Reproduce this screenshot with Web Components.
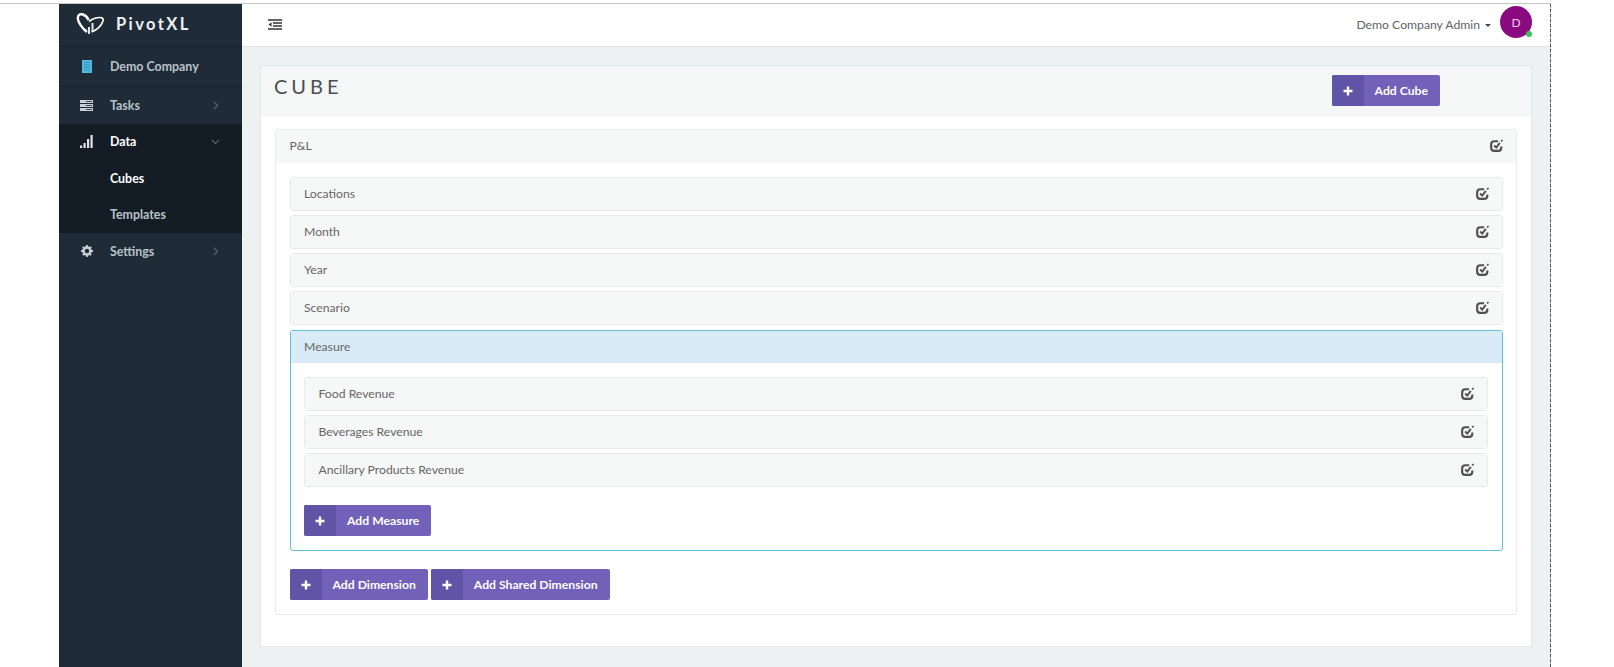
<!DOCTYPE html>
<html>
<head>
<meta charset="utf-8">
<title>PivotXL</title>
<style>
  html, body { margin: 0; height: 100%; background: #fff; overflow: hidden; }
  body { font-family: Lato, "Open Sans", sans-serif; }
</style>
</head>
<body>

<template id="nav-item-tpl">
  <style>
    :host { display: flex; align-items: center; height: 36.5px; color: #b9c2c9; font-size: 12.4px; font-weight: 700; }
    :host([active]) { color: #fff; }
    :host([first]) { height: 39px; }
    .icon { width: 51px; box-sizing: border-box; display: flex; justify-content: center; padding-left: 4px; flex: none; }
    .label { flex: 1; }
    .caret { width: 29px; flex: none; display: flex; }
  </style>
  <span class="icon"><slot name="icon"></slot></span>
  <span class="label"><slot></slot></span>
  <span class="caret"><slot name="caret"></slot></span>
</template>

<template id="button-tpl">
  <style>
    :host { display: inline-flex; height: 31px; border-radius: 2px; background: #7161b8; color: #fff; font-size: 12.2px; font-weight: 700; overflow: hidden; }
    .plus { width: 32px; background: #6153a6; display: flex; align-items: center; justify-content: center; flex: none; }
    .text { padding: 0 12px 0 11px; display: flex; align-items: center; white-space: nowrap; }
  </style>
  <span class="plus">
    <svg width="10" height="10" viewBox="0 0 10 10"><path d="M5 .5v9M.5 5h9" stroke="#fff" stroke-width="2.400" fill="none"/></svg>
  </span>
  <span class="text"><slot></slot></span>
</template>

<template id="row-tpl">
  <style>
    :host { display: block; border: 1px solid #e8ebec; border-radius: 3px; background: #fff; color: #666; font-size: 12.2px; }
    :host([active]) { border-color: #63c0cf; margin-top: 1px; }
    :host([tall]) .head { height: 33px; }
    .head { display: flex; align-items: center; justify-content: space-between; height: 32px; padding: 0 12px 2px 13.500px; box-sizing: border-box; background: #f6f7f7; }
    :host([active]) .head { background: #d9ebf7; }
    :host([active]) .edit { display: none; }
    .body { display: none; padding: 14px 13.500px; }
    :host([open]) .body { display: block; }
    svg { display: block; }
  </style>
  <div class="head">
    <span id="title"></span>
    <svg class="edit" width="15" height="15" viewBox="0 0 14 14" fill="none" stroke="#505050" stroke-width="2">
      <path d="M11.500 8v1c0 1.800-1 3-3 3H5c-2 0-3-1.200-3-3V6c0-2 1-3 3-3h3.500"/>
      <path d="M4.800 7l2 2 3.300-4.400" stroke-width="1.800"/>
      <path d="M11.300 3.200l1.300-1.400" stroke-width="1.500"/>
    </svg>
  </div>
  <div class="body"><slot></slot></div>
</template>

<template id="sidebar-tpl">
  <style>
    :host { display: block; width: 183px; flex: none; background: #1f2c38; }
    .logo { height: 43px; display: flex; align-items: center; padding: 0 0 3px 17px; gap: 11px; color: #eef1f3; font-size: 16.500px; font-weight: 700; letter-spacing: 2.400px; border-bottom: 1px solid #18222c; box-sizing: border-box; }
    .open { background: #141c25; }
    .sep { border-bottom: 1px solid #18222c; }
    .down { margin-left: -2px; }
    svg { display: block; }
  </style>
  <div class="logo">
    <svg width="29" height="23" viewBox="0 0 29 23" fill="none">
      <path d="M11 20C6 16 2 10 1.800 6.500 1.600 3 4 1.500 7 2.500c3 1 4.500 3 5.500 5.500" stroke="#fff" stroke-width="2.400"/>
      <path d="M15.500 20c5-2 10-6.500 11.500-11 .7-2.300-.8-3.500-3-3.500-4 0-8 1.500-11 4" stroke="#fff" stroke-width="1.700"/>
      <path d="M9.500 20v-3M13 22v-7M16.500 19v-8" stroke="#dfe5ea" stroke-width="2"/>
    </svg>
    <span>PivotXL</span>
  </div>
  <px-nav-item class="sep" first>
    <svg slot="icon" width="10" height="13" viewBox="0 0 10 13"><rect width="10" height="13" fill="#4fb9e3"/><path d="M2 2.500h6M2 5h6M2 7.500h6M2 10h6" stroke="#2a7fa6" stroke-width="1" stroke-dasharray="1.500 .7"/></svg>
    Demo Company
  </px-nav-item>
  <px-nav-item>
    <svg slot="icon" width="13" height="11" viewBox="0 0 13 11"><path d="M0 0h13v3H0zM0 4h13v3H0zM0 8h13v3H0z" fill="#c9ced2"/><path d="M6 1.500h6M6 5.500h6M6 9.500h6" stroke="#1f2c38" stroke-width=".8"/></svg>
    Tasks
    <svg slot="caret" width="6" height="9" viewBox="0 0 6 9" fill="none" stroke="#56636e" stroke-width="1.200"><path d="M1 1l3.500 3.500L1 8"/></svg>
  </px-nav-item>
  <div class="open">
    <px-nav-item active>
      <svg slot="icon" width="13" height="13" viewBox="0 0 13 13" fill="#dfe3e6"><rect x="0" y="10.500" width="2.200" height="2.500"/><rect x="3.500" y="8" width="2.200" height="5"/><rect x="7" y="4" width="2.200" height="9"/><rect x="10.500" y="0" width="2.200" height="13"/></svg>
      Data
      <svg class="down" slot="caret" width="9" height="6" viewBox="0 0 9 6" fill="none" stroke="#56636e" stroke-width="1.200"><path d="M1 1l3.500 3.500L8 1"/></svg>
    </px-nav-item>
    <px-nav-item active>Cubes</px-nav-item>
    <px-nav-item>Templates</px-nav-item>
  </div>
  <px-nav-item>
    <svg slot="icon" width="12" height="12" viewBox="0 0 12 12"><circle cx="6" cy="6" r="3.500" fill="none" stroke="#c9ced2" stroke-width="2.600"/><path d="M6 0v12M0 6h12M1.800 1.800l8.400 8.400M10.200 1.800l-8.400 8.400" stroke="#c9ced2" stroke-width="1.800" stroke-dasharray="2 8"/></svg>
    Settings
    <svg slot="caret" width="6" height="9" viewBox="0 0 6 9" fill="none" stroke="#56636e" stroke-width="1.200"><path d="M1 1l3.500 3.500L1 8"/></svg>
  </px-nav-item>
</template>

<template id="topbar-tpl">
  <style>
    :host { display: flex; align-items: center; height: 43px; background: #fff; padding: 0 18px 2px 26px; border-bottom: 1px solid #e4e7e9; box-sizing: border-box; font-size: 12.2px; color: #5d6468; }
    .who { margin-left: auto; display: flex; align-items: center; }
    .tri { width: 0; height: 0; border: 3.500px solid transparent; border-top-color: #444; border-bottom: 0; margin: 2px 9px 0 5px; }
    .avatar { position: relative; width: 32px; height: 32px; margin-top: -4px; border-radius: 50%; background: #8a0a7f; color: #f0c9ec; display: flex; align-items: center; justify-content: center; font-size: 12px; }
    .dot { position: absolute; right: 0; bottom: 1px; width: 6px; height: 6px; border-radius: 50%; background: #38c25a; }
    svg { display: block; }
  </style>
  <svg width="14" height="11" viewBox="0 0 14 11"><path d="M0 1h14M5 4h9M5 7h9M0 10h14" stroke="#333" stroke-width="1.700"/><path d="M3.500 3.200L.5 5.500l3 2.300z" fill="#333"/></svg>
  <div class="who">
    <span>Demo Company Admin</span><i class="tri"></i>
    <div class="avatar">D<span class="dot"></span></div>
  </div>
</template>

<template id="panel-tpl">
  <style>
    :host { display: block; background: #fff; border: 1px solid #e6e9ea; box-sizing: border-box; }
    .head { display: flex; align-items: center; height: 51px; background: #f5f7f7; padding: 0 91px 2px 13px; box-sizing: border-box; }
    h1 { margin: 0 0 10px; font-size: 20px; font-weight: 400; letter-spacing: 4px; color: #4a4f52; }
    .btn { margin-left: auto; }
    .body { padding: 12px 14px 31px; }
  </style>
  <div class="head">
    <h1 id="title"></h1>
    <span class="btn"><slot name="action"></slot></span>
  </div>
  <div class="body"><slot></slot></div>
</template>

<template id="app-tpl">
  <style>
    :host { display: flex; width: 1551px; height: 664px; margin: 3px 0 0; border-top: 1px solid #c8c8c8; box-sizing: border-box; background: #fff; }
    .gutter { width: 59px; flex: none; }
    .main { width: 1308px; flex: none; background: #eef1f2; }
    .content { padding: 18px 18px 0; }
    .rule { width: 1px; flex: none; background: repeating-linear-gradient(#555 0 3px, #bbb 3px 5px); }
  </style>
  <div class="gutter"></div>
  <px-sidebar></px-sidebar>
  <div class="main">
    <px-topbar></px-topbar>
    <div class="content"><slot></slot></div>
  </div>
  <div class="rule"></div>
</template>

<px-app>
  <px-panel title="CUBE">
    <px-button slot="action">Add Cube</px-button>
    <px-row title="P&amp;L" open tall>
      <div style="display:flex;flex-direction:column;gap:4px">
        <px-row title="Locations"></px-row>
        <px-row title="Month"></px-row>
        <px-row title="Year"></px-row>
        <px-row title="Scenario"></px-row>
        <px-row title="Measure" open active>
          <div style="display:flex;flex-direction:column;gap:4px">
            <px-row title="Food Revenue"></px-row>
            <px-row title="Beverages Revenue"></px-row>
            <px-row title="Ancillary Products Revenue"></px-row>
          </div>
          <div style="margin-top:18px;height:31px;display:flex"><px-button>Add Measure</px-button></div>
        </px-row>
      </div>
      <div style="margin-top:18px;display:flex;gap:3px"><px-button>Add Dimension</px-button><px-button>Add Shared Dimension</px-button></div>
    </px-row>
  </px-panel>
</px-app>

<script>
  // every element just clones its template into an open shadow root
  const define = (tag, tplId, setup) => {
    customElements.define(tag, class extends HTMLElement {
      constructor() {
        super();
        this.attachShadow({ mode: "open" });
        this.shadowRoot.appendChild(document.getElementById(tplId).content.cloneNode(true));
      }
      connectedCallback() {
        if (setup) setup(this);
      }
    });
  };

  const setTitle = (el) => {
    el.shadowRoot.querySelector("#title").textContent = el.getAttribute("title");
    el.removeAttribute("title");
  };

  define("px-nav-item", "nav-item-tpl");
  define("px-button", "button-tpl");
  define("px-row", "row-tpl", setTitle);
  define("px-sidebar", "sidebar-tpl");
  define("px-topbar", "topbar-tpl");
  define("px-panel", "panel-tpl", setTitle);
  define("px-app", "app-tpl");
</script>
</body>
</html>
